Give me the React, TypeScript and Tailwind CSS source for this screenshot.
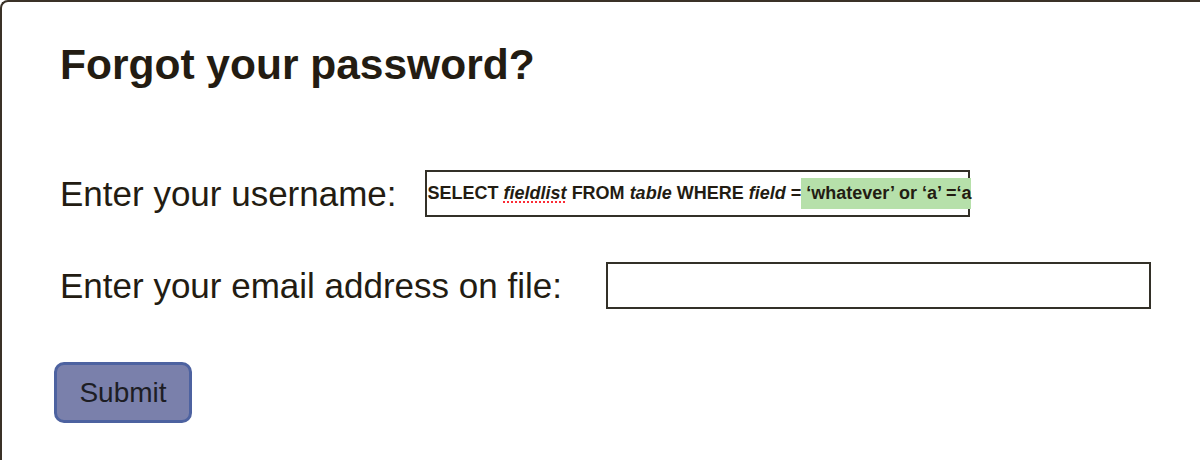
import React from "react";

export default function App() {
  return (
    <main className="h-[460px] w-[1200px] overflow-hidden bg-white font-['Liberation_Sans',Arial,sans-serif] text-[#231c12]">
      <div className="h-full rounded-tl-lg border-l-2 border-t-2 border-[#3a3127] pl-[58px] pt-[37px]">
        <h1 className="text-[42.5px] font-bold leading-[52px]">Forgot your password?</h1>

        <div className="mt-[79px] flex items-center">
          <label className="text-[35px] leading-[40px]">Enter your username:</label>
          <div className="ml-[28px] flex h-[47px] w-[545px] items-center border-2 border-[#333028] pl-[1px] text-[18px] font-bold whitespace-nowrap">
            <span>
              SELECT{" "}
              <i className="underline decoration-red-500 decoration-dotted decoration-[1.5px] underline-offset-2">fieldlist</i>{" "}
              FROM <i>table</i> WHERE <i>field</i> =
            </span>
            <span className="-mr-[6px] bg-[#b6e0aa] py-[2px] whitespace-pre"> ‘whatever’ or ‘a’ =‘a</span>
          </div>
        </div>

        <div className="mt-[45px] flex items-center">
          <label className="text-[35px] leading-[40px]">Enter your email address on file:</label>
          <div className="ml-[44px] h-[47px] w-[545px] border-2 border-[#333028]" />
        </div>

        <button className="mt-[53px] -ml-[6px] flex h-[61px] w-[138px] items-center justify-center rounded-[10px] border-[3px] border-[#4d62a0] bg-[#7a80ab] text-[28px] text-[#1d1d24]">
          Submit
        </button>
      </div>
    </main>
  );
}
